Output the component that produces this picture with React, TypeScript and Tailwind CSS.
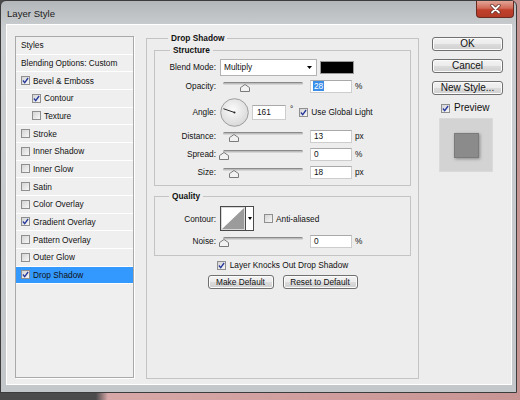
import React from "react";

type StyleRow = { label: string; head?: boolean; on?: boolean; sub?: boolean; active?: boolean };

const styleRows: StyleRow[] = [
  { label: "Styles", head: true },
  { label: "Blending Options: Custom", head: true },
  { label: "Bevel & Emboss", on: true },
  { label: "Contour", on: true, sub: true },
  { label: "Texture", sub: true },
  { label: "Stroke" },
  { label: "Inner Shadow" },
  { label: "Inner Glow" },
  { label: "Satin" },
  { label: "Color Overlay" },
  { label: "Gradient Overlay", on: true },
  { label: "Pattern Overlay" },
  { label: "Outer Glow" },
  { label: "Drop Shadow", on: true, active: true },
];

const btn =
  "flex items-center justify-center rounded-[3px] border border-[#707070] bg-[linear-gradient(#f3f3f3_0%,#ebebeb_50%,#dcdcdc_51%,#cfcfcf_100%)] shadow-[inset_0_0_0_1px_#fbfbfb]";

function Check({ on }: { on?: boolean }) {
  return (
    <span className="flex h-[9px] w-[9px] shrink-0 items-center justify-center border border-[#8f8f8f] bg-[linear-gradient(135deg,#d4d4d4,#f7f7f7)]">
      {on && (
        <svg width="7" height="7" viewBox="0 0 7 7">
          <path d="M0.9 3.5 L2.7 5.6 L6.1 1" fill="none" stroke="#25389c" strokeWidth="1.3" />
        </svg>
      )}
    </span>
  );
}

function Label({ children }: { children: React.ReactNode }) {
  return <span className="w-[62px] shrink-0 pr-[1px] text-right">{children}</span>;
}

// thumb = centre of the handle, px from the slider's left edge
function Slider({ thumb }: { thumb: number }) {
  return (
    <div className="relative ml-[3px] h-[18px] w-[86px] shrink-0">
      <div className="absolute left-[3px] top-[5px] h-[3px] w-[80px] rounded-[2px] border-t border-[#8a8a8a] bg-[linear-gradient(#b0b0b0,#e2e2e2)]" />
      <svg className="absolute top-[7px]" style={{ left: thumb - 5 }} width="10" height="8" viewBox="0 0 10 8">
        <path d="M0.5 7.5 V3.6 L5 0.5 L9.5 3.6 V7.5 Z" fill="#f2f2f2" stroke="#7a7a7a" />
      </svg>
    </div>
  );
}

function Field({ value, unit, selected }: { value: string; unit: string; selected?: boolean }) {
  return (
    <>
      <div className="ml-[4px] flex h-[13px] w-[42px] shrink-0 items-center border border-[#cdcdcd] border-t-[#a9a9a9] bg-white pl-[2px]">
        <span className={selected ? "bg-[#3b8ee8] px-[1px] text-white" : "px-[1px]"}>{value}</span>
      </div>
      <span className="ml-[3px]">{unit}</span>
    </>
  );
}

export default function App() {
  return (
    <div className="h-[400px] w-[520px] overflow-hidden bg-[linear-gradient(90deg,#4b4b4b_0px,#4b4b4b_96px,#d8a8a8_108px,#c89494_100%)] font-['Liberation_Sans',Arial,sans-serif] text-[8.3px] leading-[10px] text-[#111]">
      <div className="flex h-[393px] w-[517px] flex-col rounded-t-[6px] border border-[#3c3c3c] bg-[linear-gradient(180deg,#b4b7ba_0%,#cbced0_7%,#c4c7ca_100%)]">
        {/* title bar */}
        <div className="flex h-[23px] shrink-0 items-start">
          <span className="ml-[6px] mt-[7px] text-[9.6px] leading-[11px] text-[#1c1c1c]">Layer Style</span>
          <div className="ml-auto mr-[2px] flex h-[17px] w-[38px] items-center justify-center rounded-b-[4px] border border-t-0 border-[#6b2a20] bg-[linear-gradient(#e3a597_0%,#d06a58_45%,#c0402c_55%,#b33a28_100%)]">
            <svg width="11" height="10" viewBox="0 0 11 10">
              <path d="M2 1.5 L9 8.5 M9 1.5 L2 8.5" stroke="#5a2a24" strokeWidth="3.2" strokeLinecap="round" />
              <path d="M2 1.5 L9 8.5 M9 1.5 L2 8.5" stroke="#fff" strokeWidth="1.8" strokeLinecap="round" />
            </svg>
          </div>
        </div>

        {/* dialog body */}
        <div className="ml-[5px] mr-[4px] mb-[7px] flex h-[361px] items-start border border-white bg-[#ededed] pl-[8px] pt-[8px]">
          {/* styles list */}
          <div className="mt-[3px] h-[342px] w-[119px] shrink-0 border border-[#a9a9a9] bg-[#efefef] shadow-[1px_1px_0_#fff]">
            {styleRows.map((r) => (
              <div
                key={r.label}
                className={`flex h-[17.66px] items-center gap-[3px] border-b border-white ${r.sub ? "pl-[16px]" : "pl-[5px]"} ${r.active ? "bg-[#3399ff]" : ""}`}
              >
                {!r.head && <Check on={r.on} />}
                <span>{r.label}</span>
              </div>
            ))}
          </div>

          {/* drop shadow settings */}
          <fieldset className="ml-[12px] h-[346px] w-[273px] shrink-0 border border-[#c4c4c4] px-[7px]">
            <legend className="ml-[14px] px-[3px] font-bold leading-[10px]">Drop Shadow</legend>

            <fieldset className="mt-[2px] h-[141px] border border-[#c4c4c4] pt-[3px]">
              <legend className="ml-[15px] px-[3px] font-bold leading-[10px]">Structure</legend>

              <div className="flex h-[18px] items-center">
                <Label>Blend Mode:</Label>
                <div className="ml-[3px] flex h-[17px] w-[97px] items-center border border-[#b3b3b3] bg-white pl-[3px]">
                  <span>Multiply</span>
                  <svg className="ml-auto mr-[4px]" width="5" height="3" viewBox="0 0 5 3">
                    <path d="M0 0 H5 L2.5 3 Z" fill="#000" />
                  </svg>
                </div>
                <div className="ml-[3px] h-[13px] w-[34px] border border-[#9a9a9a] bg-black" />
              </div>

              <div className="mt-[1px] flex h-[18px] items-center">
                <Label>Opacity:</Label>
                <Slider thumb={25} />
                <Field value="28" unit="%" selected />
              </div>

              <div className="mt-[2px] flex h-[30px] items-center">
                <Label>Angle:</Label>
                <svg className="ml-[3px] shrink-0" width="29" height="29" viewBox="0 0 29 29">
                  <defs>
                    <radialGradient id="dial" cx="45%" cy="40%" r="65%">
                      <stop offset="0" stopColor="#fbfbfb" />
                      <stop offset="1" stopColor="#d6d6d6" />
                    </radialGradient>
                  </defs>
                  <circle cx="14.5" cy="14.5" r="13.8" fill="url(#dial)" stroke="#8c8c8c" strokeWidth="0.8" />
                  <line x1="14.5" y1="14.5" x2="3.4" y2="10.7" stroke="#262626" strokeWidth="1" />
                  <circle cx="14.5" cy="14.5" r="1" fill="#262626" />
                </svg>
                <div className="ml-[3px] flex h-[15px] w-[34px] items-center border border-[#cdcdcd] border-t-[#a9a9a9] bg-white pl-[4px]">
                  161
                </div>
                <span className="ml-[4px] self-start pt-[7px]">°</span>
                <span className="ml-[6px]">
                  <Check on />
                </span>
                <span className="ml-[3px]">Use Global Light</span>
              </div>

              <div className="flex h-[18px] items-center">
                <Label>Distance:</Label>
                <Slider thumb={14} />
                <Field value="13" unit="px" />
              </div>
              <div className="flex h-[18px] items-center">
                <Label>Spread:</Label>
                <Slider thumb={4} />
                <Field value="0" unit="%" />
              </div>
              <div className="flex h-[18px] items-center">
                <Label>Size:</Label>
                <Slider thumb={14} />
                <Field value="18" unit="px" />
              </div>
            </fieldset>

            <fieldset className="mt-[5px] h-[65px] border border-[#c4c4c4] pt-[5px]">
              <legend className="ml-[14px] px-[3px] font-bold leading-[10px]">Quality</legend>

              <div className="flex h-[25px] items-center">
                <Label>Contour:</Label>
                <div className="ml-[3px] flex h-[25px] w-[34px] border border-[#4a4a4a] bg-white">
                  <div className="h-full w-[24px] border border-[#d8d8d8]">
                    <svg width="22" height="21" viewBox="0 0 22 21" className="block">
                      <path d="M0 21 L22 0 V21 Z" fill="#9b9b9b" />
                    </svg>
                  </div>
                  <div className="flex flex-1 items-center justify-center border-l border-[#4a4a4a]">
                    <svg width="4" height="3" viewBox="0 0 4 3">
                      <path d="M0 0 H4 L2 3 Z" fill="#000" />
                    </svg>
                  </div>
                </div>
                <span className="ml-[10px]">
                  <Check />
                </span>
                <span className="ml-[3px]">Anti-aliased</span>
              </div>

              <div className="mt-[1px] flex h-[18px] items-center">
                <Label>Noise:</Label>
                <Slider thumb={4} />
                <Field value="0" unit="%" />
              </div>
            </fieldset>

            <div className="mt-[2px] flex h-[14px] items-center justify-center gap-[4px]">
              <Check on />
              <span>Layer Knocks Out Drop Shadow</span>
            </div>

            <div className="mt-[3px] flex justify-center gap-[9px]">
              <div className={`${btn} h-[14px] w-[66px]`}>Make Default</div>
              <div className={`${btn} h-[14px] w-[75px]`}>Reset to Default</div>
            </div>
          </fieldset>

          {/* buttons + preview */}
          <div className="ml-[13px] mt-[4px] flex w-[71px] shrink-0 flex-col text-[10px] leading-[12px]">
            <div className={`${btn} h-[14px] border-[#3c7fb1] shadow-[inset_0_0_0_1px_#c4e5f6]`}>OK</div>
            <div className={`${btn} mt-[8px] h-[14px]`}>Cancel</div>
            <div className={`${btn} mt-[8px] h-[14px]`}>New Style...</div>
            <div className="mt-[6px] flex h-[14px] items-center gap-[4px] pl-[9px]">
              <Check on />
              <span>Preview</span>
            </div>
            <div className="ml-[7px] mt-[3px] flex h-[54px] w-[54px] items-center justify-center border border-[#dadada] bg-[#d3d3d3]">
              <div className="h-[25px] w-[25px] border border-[#7b7b7b] bg-[#8b8b8b] shadow-[1px_1px_3px_rgba(0,0,0,0.35)]" />
            </div>
          </div>
        </div>
      </div>
    </div>
  );
}
